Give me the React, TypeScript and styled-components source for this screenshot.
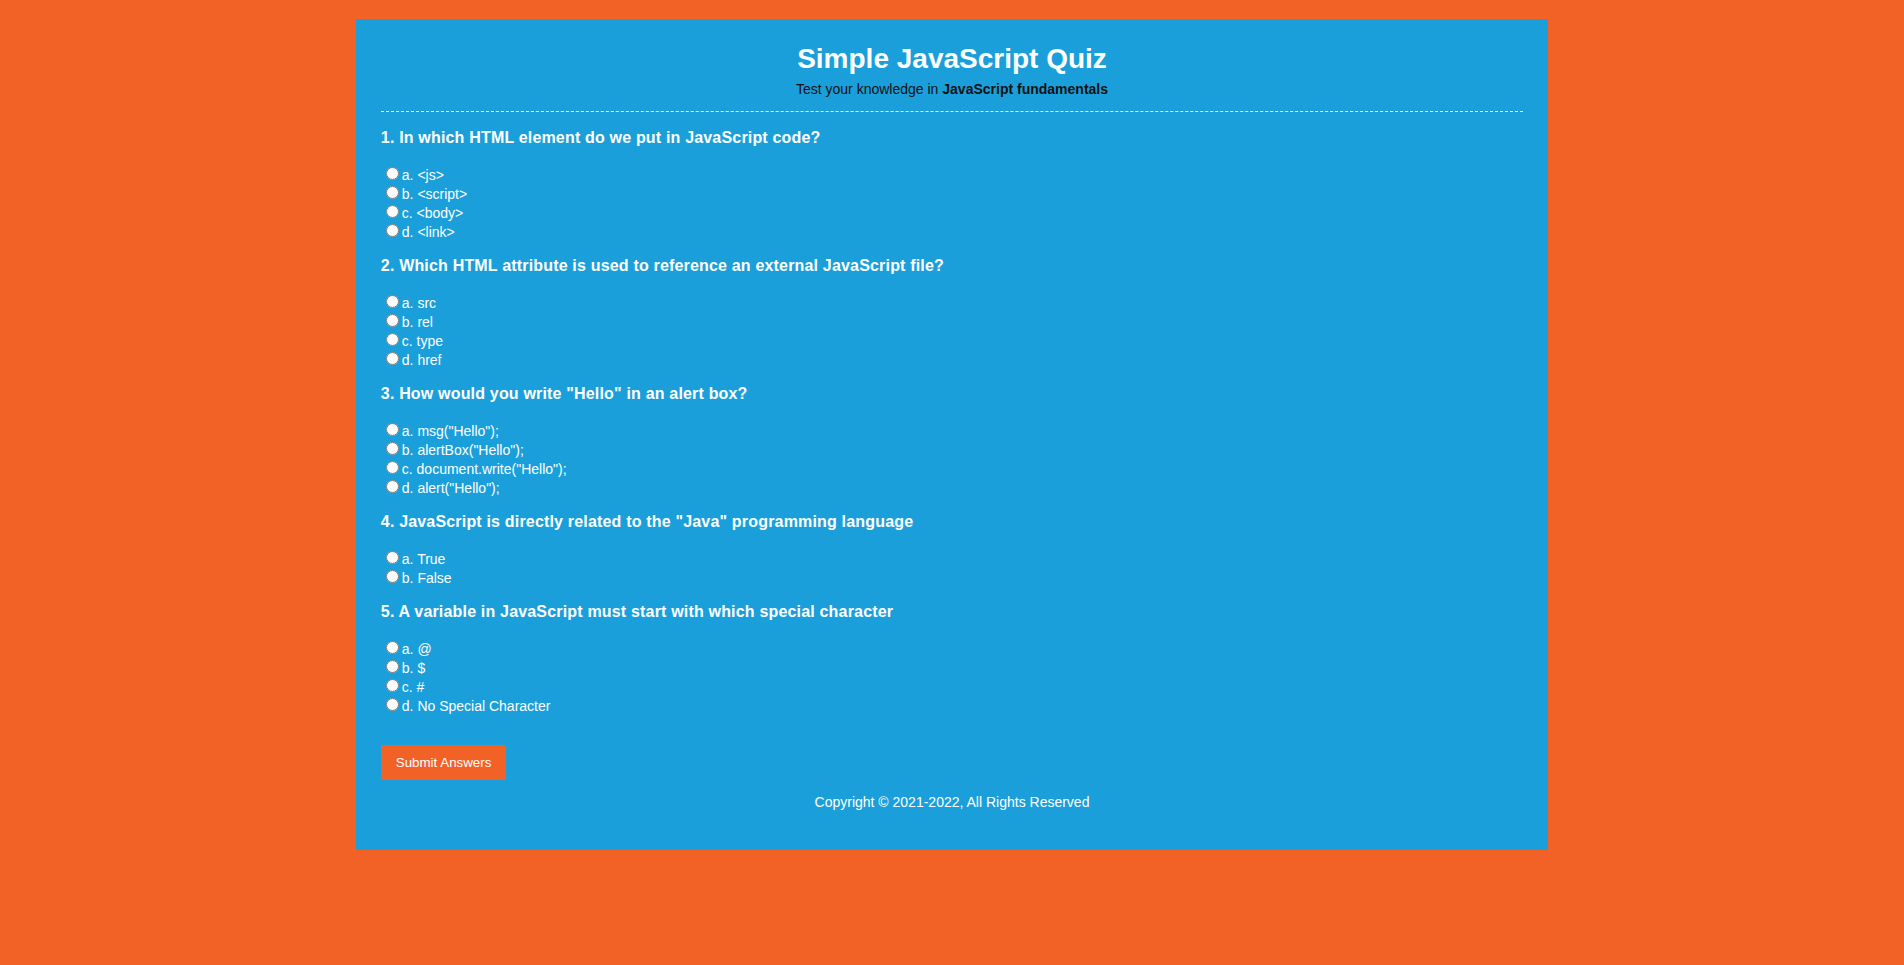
import React from 'react';
import styled, { createGlobalStyle } from 'styled-components';

const GlobalStyle = createGlobalStyle`
  html, body {
    margin: 0;
    padding: 0;
    background: #f26227;
  }
  body {
    font-family: 'Liberation Sans', Arial, sans-serif;
    color: #fff;
  }
`;

const Page = styled.div`
  padding: 19px 0 116px;
`;

const Wrapper = styled.div`
  width: 60%;
  margin: 0 auto;
  padding: 24px 25px 27px;
  background: #1a9fdb;
`;

const Header = styled.header`
  text-align: center;
  padding-bottom: 14px;
  border-bottom: 1px dashed #fff;
`;

const Title = styled.h1`
  margin: 0 0 6px;
  font-size: 28px;
  font-weight: bold;
  color: #fff;
`;

const Subtitle = styled.p`
  margin: 0;
  font-size: 14px;
  color: #111;

  strong {
    font-weight: bold;
  }
`;

const QuizForm = styled.form`
  margin-top: 17px;
`;

const QuestionBlock = styled.div`
  margin-bottom: 16.9px;
`;

const QuestionTitle = styled.h3`
  margin: 0 0 17px;
  font-size: 16px;
  font-weight: bold;
  letter-spacing: 0.18px;
  color: #fff;
`;

const OptionRow = styled.label`
  display: block;
  height: 19px;
  font-size: 14px;
  color: #fff;
`;

const Radio = styled.input`
  width: 13px;
  height: 13px;
  margin: 3px 3px 0 5px;
`;

const SubmitButton = styled.button`
  margin-top: 15px;
  height: 35px;
  padding: 0 15px;
  border: none;
  background: #f26227;
  color: #fff;
  font-family: 'Liberation Sans', Arial, sans-serif;
  font-size: 13.3333px;
  cursor: pointer;
`;

const Footer = styled.footer`
  margin: 14px 0 13px;
  text-align: center;
  font-size: 14px;
  color: #fff;
`;

const questions = [
  {
    q: '1. In which HTML element do we put in JavaScript code?',
    options: ['<js>', '<script>', '<body>', '<link>'],
  },
  {
    q: '2. Which HTML attribute is used to reference an external JavaScript file?',
    options: ['src', 'rel', 'type', 'href'],
  },
  {
    q: '3. How would you write "Hello" in an alert box?',
    options: ['msg("Hello");', 'alertBox("Hello");', 'document.write("Hello");', 'alert("Hello");'],
  },
  {
    q: '4. JavaScript is directly related to the "Java" programming language',
    options: ['True', 'False'],
  },
  {
    q: '5. A variable in JavaScript must start with which special character',
    options: ['@', '$', '#', 'No Special Character'],
  },
];

const letters = ['a', 'b', 'c', 'd'];

export default function App() {
  return (
    <>
      <GlobalStyle />
      <Page>
        <Wrapper>
          <Header>
            <Title>Simple JavaScript Quiz</Title>
            <Subtitle>
              Test your knowledge in <strong>JavaScript fundamentals</strong>
            </Subtitle>
          </Header>
          <QuizForm onSubmit={e => e.preventDefault()}>
            {questions.map((item, qi) => (
              <QuestionBlock key={qi}>
                <QuestionTitle>{item.q}</QuestionTitle>
                {item.options.map((opt, oi) => (
                  <OptionRow key={oi}>
                    <Radio type="radio" name={`q${qi + 1}`} value={letters[oi]} />
                    {letters[oi]}. {opt}
                  </OptionRow>
                ))}
              </QuestionBlock>
            ))}
            <SubmitButton type="submit">Submit Answers</SubmitButton>
          </QuizForm>
          <Footer>Copyright &copy; 2021-2022, All Rights Reserved</Footer>
        </Wrapper>
      </Page>
    </>
  );
}
